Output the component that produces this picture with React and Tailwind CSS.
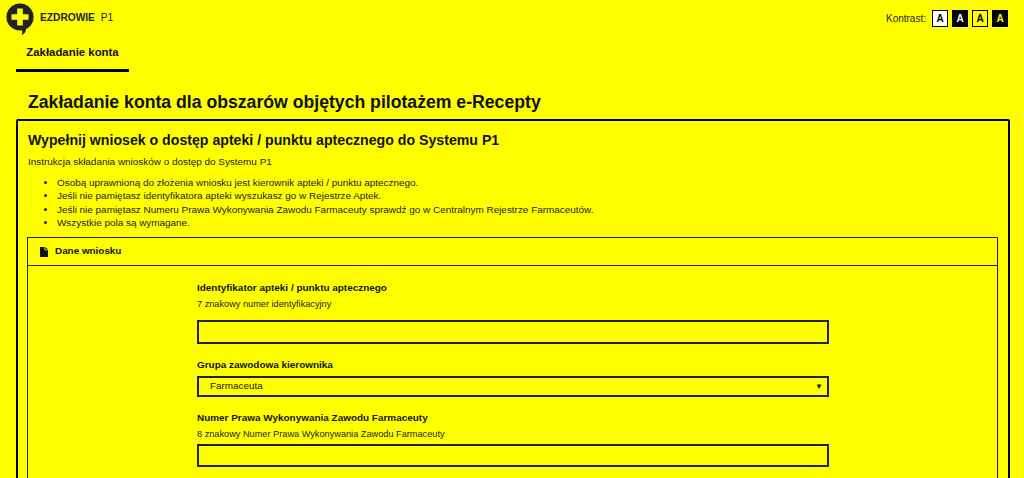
import React from 'react';

const Logo = () => (
  <svg width="30" height="32" viewBox="0 0 30 32">
    <circle cx="14" cy="14" r="13.600" fill="#222" />
    <path fill="#222" d="M12 24h8c.4 3.800-1 6.800-4.500 8 .8-1.800 1-3.500.5-5.500z" />
    <path fill="#ff0" d="M11.200 5.500h5.600v5.700h5.700v5.600h-5.700v5.700h-5.600v-5.700H5.500v-5.600h5.700z" />
  </svg>
);

const FileIcon = () => (
  <svg width="8" height="10" viewBox="0 0 8 10" className="shrink-0">
    <path fill="#111" d="M0 0h4.500v3.200H8V10H0zM5.300 0 8 2.500H5.300z" />
  </svg>
);

const ContrastBtn = ({ className }) => (
  <span className={`flex h-[17px] w-[16px] items-center justify-center border border-black text-[10px] font-bold leading-none ${className}`}>A</span>
);

const Field = ({ label, hint, className }) => (
  <div className={className}>
    <div className="text-[9.950px] font-bold leading-[14px] text-[#111]">{label}</div>
    {hint && <div className="mt-[3px] text-[9.200px] leading-[12px] text-[#222]">{hint}</div>}
  </div>
);

export default function App() {
  return (
    <div className="h-[478px] overflow-hidden bg-[#ffff00] font-['Liberation_Sans',Arial,sans-serif] text-[#111]">
      <header className="flex justify-between pl-[6px] pr-[16px] pt-[3px]">
        <div className="flex items-start gap-[4px]">
          <Logo />
          <span className="text-[10.200px] font-bold leading-[30px] text-[#222]">
            EZDROWIE <span className="ml-[3px] font-normal">P1</span>
          </span>
        </div>
        <div className="flex items-center gap-[4px] self-start pt-[7px]">
          <span className="mr-[2px] text-[10px] text-[#222]">Kontrast:</span>
          <ContrastBtn className="bg-white text-black" />
          <ContrastBtn className="bg-black text-white" />
          <ContrastBtn className="bg-[#ffff00] text-black" />
          <ContrastBtn className="bg-black text-[#ffff00]" />
        </div>
      </header>

      <nav className="mt-[4px] px-[16px]">
        <div className="h-[33px] w-[113px] border-b-[3px] border-black text-center text-[11.400px] font-bold leading-[26px]">
          Zakładanie konta
        </div>
      </nav>

      <main className="pl-[16px] pr-[14px]">
        <h1 className="mt-[19px] pl-[12px] text-[17.650px] font-bold leading-[22px]">
          Zakładanie konta dla obszarów objętych pilotażem e-Recepty
        </h1>

        <section className="mt-[6px] h-[400px] rounded-t-[2px] border-2 border-black pl-[9px] pr-[10px]">
          <h2 className="ml-[1px] mt-[10px] text-[14.150px] font-bold leading-[18px]">
            Wypełnij wniosek o dostęp apteki / punktu aptecznego do Systemu P1
          </h2>
          <p className="ml-[1px] mt-[7px] text-[9.930px] leading-[12px] text-[#222]">
            Instrukcja składania wniosków o dostęp do Systemu P1
          </p>
          <ul className="ml-[1px] mt-[8px] list-disc pl-[29px] text-[9.930px] leading-[13.330px] text-[#222]">
            <li>Osobą uprawnioną do złożenia wniosku jest kierownik apteki / punktu aptecznego.</li>
            <li>Jeśli nie pamiętasz identyfikatora apteki wyszukasz go w Rejestrze Aptek.</li>
            <li>Jeśli nie pamiętasz Numeru Prawa Wykonywania Zawodu Farmaceuty sprawdź go w Centralnym Rejestrze Farmaceutów.</li>
            <li>Wszystkie pola są wymagane.</li>
          </ul>

          <div className="mt-[8px] h-[300px] border border-[#222]">
            <div className="flex h-[28px] items-center gap-[7px] border-b border-[#222] pl-[12px] text-[9.900px] font-bold">
              <FileIcon />
              Dane wniosku
            </div>
            <div className="pl-[169px]">
              <Field className="mt-[15px]" label="Identyfikator apteki / punktu aptecznego" hint="7 znakowy numer identyfikacyjny" />
              <div className="mt-[10px] h-[24px] w-[632px] border-2 border-[#222]" />
              <Field className="mt-[14px]" label="Grupa zawodowa kierownika" />
              <div className="mt-[4px] flex h-[21px] w-[632px] items-center justify-between border-2 border-[#222] pl-[11px] pr-[4px] text-[9.900px]">
                Farmaceuta
                <span className="text-[8px] leading-none">▼</span>
              </div>
              <Field className="mt-[14px]" label="Numer Prawa Wykonywania Zawodu Farmaceuty" hint="8 znakowy Numer Prawa Wykonywania Zawodu Farmaceuty" />
              <div className="mt-[4px] h-[23px] w-[632px] border-2 border-[#222]" />
            </div>
          </div>
        </section>
      </main>
    </div>
  );
}
